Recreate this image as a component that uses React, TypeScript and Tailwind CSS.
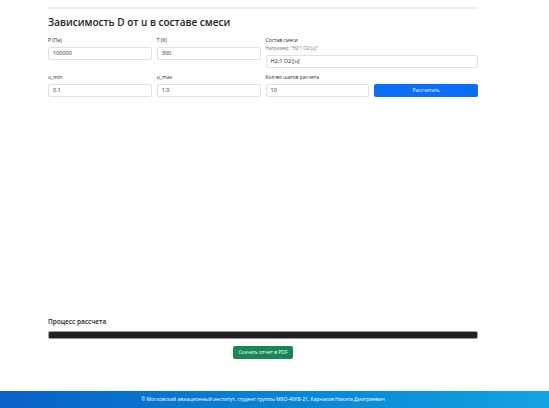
import React from "react";

const fields = [
  { label: "P (Па)", value: "100000" },
  { label: "T (K)", value: "300" },
];

const Field = ({ label, value, hint }: { label: string; value: string; hint?: string }) => (
  <div className="flex flex-col">
    <label className="text-[5px] leading-[6px] text-[#212529] mb-[4px]">{label}</label>
    {hint && <div className="text-[4.5px] leading-[5px] text-[#6c757d] -mt-[1px] mb-[4px]">{hint}</div>}
    <div className="h-[13px] border border-[#dee2e6] rounded-[2px] bg-white px-[4px] flex items-center text-[5.5px] text-[#212529]">
      {value}
    </div>
  </div>
);

export default function App() {
  return (
    <div className="min-h-[408px] flex flex-col bg-white font-['Open_Sans',sans-serif] text-[#212529]">
      <main className="flex-1 pl-[48px] pr-[71px] pt-[7px]">
        <div className="h-[2px] bg-[#ececec]" />
        <h1 className="text-[10px] leading-[14px] font-semibold mt-[6px]">Зависимость D от u в составе смеси</h1>
        <div className="grid grid-cols-4 gap-x-[5px] gap-y-[6px] mt-[8px] items-start">
          {fields.map((f) => (
            <Field key={f.label} label={f.label} value={f.value} />
          ))}
          <div className="col-span-2">
            <Field label="Состав смеси" value="H2:1 O2:[u]" hint={'Например: "H2:1 O2:[u]"'} />
          </div>
          <Field label="u_min" value="0.1" />
          <Field label="u_max" value="1.0" />
          <Field label="Кол-во шагов расчета" value="10" />
          <div className="self-end h-[13px] rounded-[2px] bg-[#0d6efd] text-white text-[5px] flex items-center justify-center">
            Рассчитать
          </div>
        </div>
        <div className="h-[220px]" />
        <div className="text-[6.5px] leading-[9px] font-semibold">Процесс рассчета</div>
        <div className="mt-[5px] h-[8px] rounded-[2px] bg-[#212121] border border-[#9a9a9a]" />
        <div className="flex justify-center mt-[7px]">
          <button className="h-[13px] px-[5px] rounded-[2px] bg-[#198754] text-white text-[5px] leading-none">
            Скачать отчет в PDF
          </button>
        </div>
      </main>
      <footer className="h-[17px] flex items-center pl-[48px] pr-[71px] bg-gradient-to-r from-[#0a62c6] to-[#14a2e2]">
        <p className="w-full text-center text-[5px] text-white">
          © Московский авиационный институт, студент группы М8О-406Б-21, Карнаков Никита Дмитриевич
        </p>
      </footer>
    </div>
  );
}
